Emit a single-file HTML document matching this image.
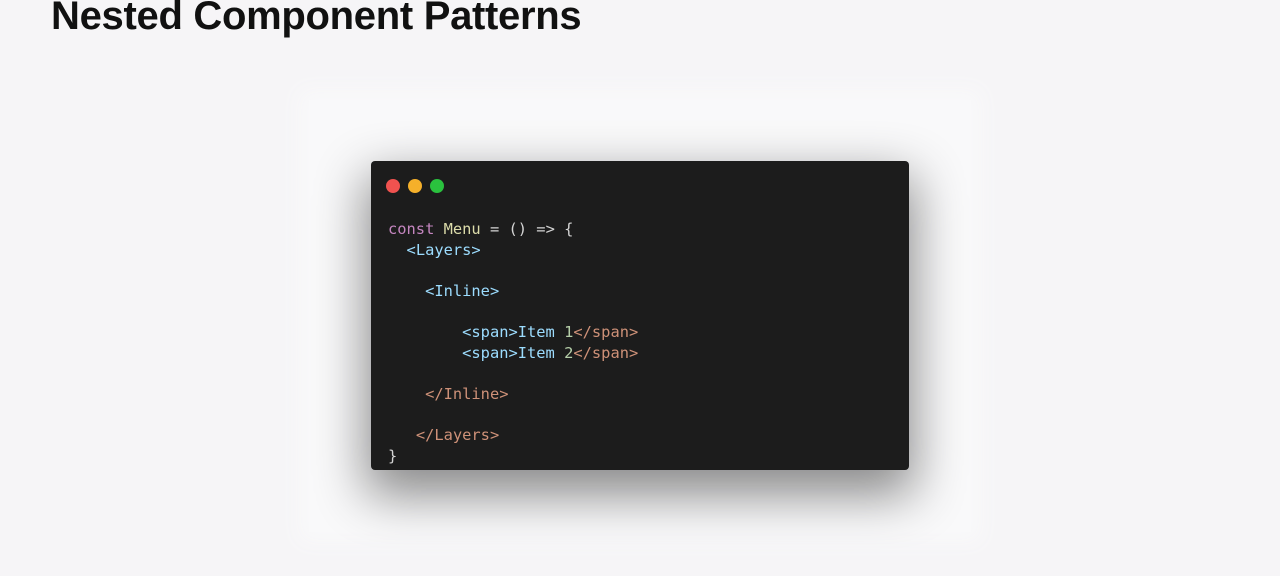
<!DOCTYPE html>
<html><head><style>
html,body{margin:0;padding:0;width:1280px;height:576px;overflow:hidden;background:#f6f5f7;}
h1{position:absolute;left:51px;top:-6px;margin:0;font:bold 40px "Liberation Sans",sans-serif;color:#111;letter-spacing:-0.3px;}
.panel{position:absolute;left:309px;top:100px;width:662px;height:432px;background:#f9f9fa;box-shadow:0 0 20px 10px #f9f9fa;}
.card{position:absolute;left:371px;top:161px;width:538px;height:309px;background:#1c1c1c;border-radius:4px;box-shadow:0 20px 50px 5px rgba(0,0,0,0.45);}
.dot{position:absolute;top:18px;width:14px;height:14px;border-radius:50%;}
pre{position:absolute;left:17px;top:58px;margin:0;font:15.4px/20.6px "DejaVu Sans Mono","Liberation Mono",monospace;color:#d4d4d4;}
.k{color:#c586c0}.f{color:#dcdcaa}.t{color:#9cdcfe}.c{color:#ce9178}.x{color:#b5cea8}
</style></head><body>
<h1>Nested Component Patterns</h1>
<div class="panel"></div>
<div class="card">
<div class="dot" style="left:15px;background:#f0524f"></div>
<div class="dot" style="left:37px;background:#f5b02a"></div>
<div class="dot" style="left:59px;background:#2ac13e"></div>
<pre><span class="k">const</span> <span class="f">Menu</span> = () =&gt; {
  <span class="t">&lt;Layers&gt;</span>

    <span class="t">&lt;Inline&gt;</span>

        <span class="t">&lt;span&gt;Item</span> <span class="x">1</span><span class="c">&lt;/span&gt;</span>
        <span class="t">&lt;span&gt;Item</span> <span class="x">2</span><span class="c">&lt;/span&gt;</span>

    <span class="c">&lt;/Inline&gt;</span>

   <span class="c">&lt;/Layers&gt;</span>
}</pre>
</div>
</body></html>
